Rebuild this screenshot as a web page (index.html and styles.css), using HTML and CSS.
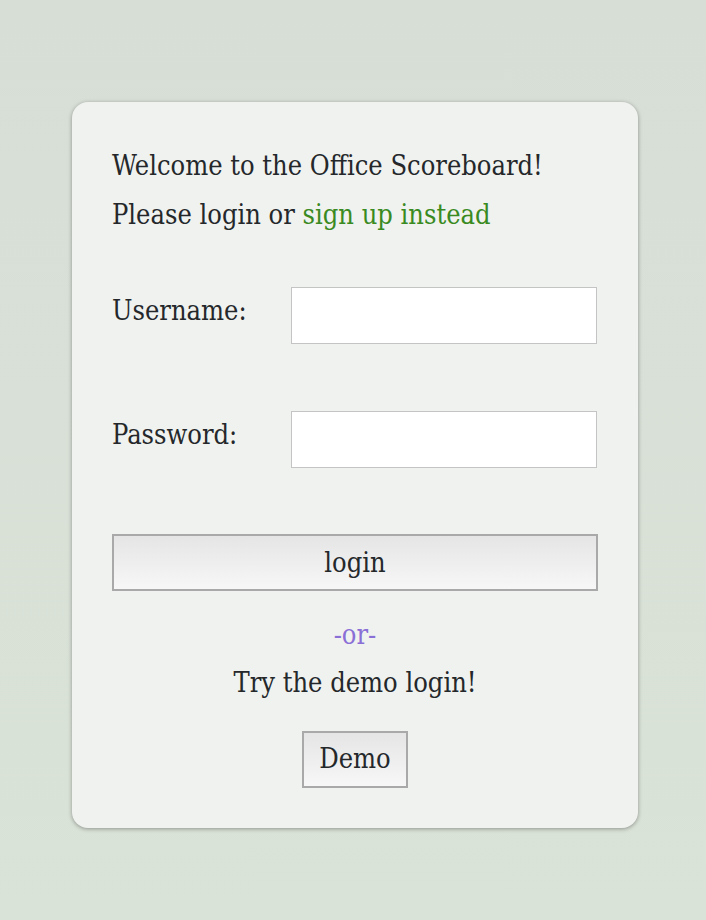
FILE: index.html
```html
<!DOCTYPE html>
<html>
<head>
<meta charset="utf-8">
<link rel="stylesheet" href="styles.css">
</head>
<body>
<div class="page">
  <div class="card">
    <p class="intro">Welcome to the Office Scoreboard!</p>
    <p class="intro">Please login or <a class="link" href="#">sign up instead</a></p>
    <form class="form">
      <div class="row">
        <label class="label">Username:</label>
        <input class="field" type="text">
      </div>
      <div class="row">
        <label class="label">Password:</label>
        <input class="field" type="password">
      </div>
      <button class="btn btn-wide" type="button">login</button>
    </form>
    <div class="or">-or-</div>
    <div class="demo-text">Try the demo login!</div>
    <div class="demo-wrap"><button class="btn btn-demo" type="button">Demo</button></div>
  </div>
</div>
</body>
</html>
```
FILE: styles.css
```css
html, body { margin: 0; padding: 0; }
body {
  background: linear-gradient(#d7ded6, #dae3d8);
  min-height: 920px;
  font-family: "DejaVu Serif Condensed", "DejaVu Serif", serif;
  color: #25282b;
}
.page { padding: 102px 0 0 4px; display: flex; justify-content: center; }
.card {
  width: 566px;
  box-sizing: border-box;
  height: 726px;
  background: #f0f2ef;
  border-radius: 16px;
  box-shadow: 0 1px 4px rgba(0,0,0,0.35);
  padding: 39px 40px 40px;
  font-size: 27px;
}
.intro { margin: 0; height: 49px; line-height: 49px; }
.link { color: #3a8a22; text-decoration: none; }
.form { margin-top: 48px; }
.row { display: flex; align-items: center; height: 57px; margin-bottom: 67px; }
.label { width: 179px; margin-top: -10px; }
.field {
  width: 306px; height: 57px; box-sizing: border-box;
  border: 1px solid #c4c4c4; background: #fff; margin: 0;
}
.btn {
  font-family: inherit; font-size: 27px; color: #25282b;
  border: 2px solid #a9a9a9;
  background: linear-gradient(#e5e5e5, #f7f7f7);
  box-sizing: border-box;
  height: 57px;
  margin: 0;
  padding-bottom: 2px;
}
.btn-wide { width: 486px; display: block; margin-top: -1px; }
.or { text-align: center; color: #8a6fd6; margin-top: 24px; line-height: 40px; }
.demo-text { text-align: center; line-height: 40px; margin-top: 8px; }
.demo-wrap { display: flex; justify-content: center; margin-top: 28px; }
.btn-demo { width: 106px; padding: 0 0 3px; }
```
